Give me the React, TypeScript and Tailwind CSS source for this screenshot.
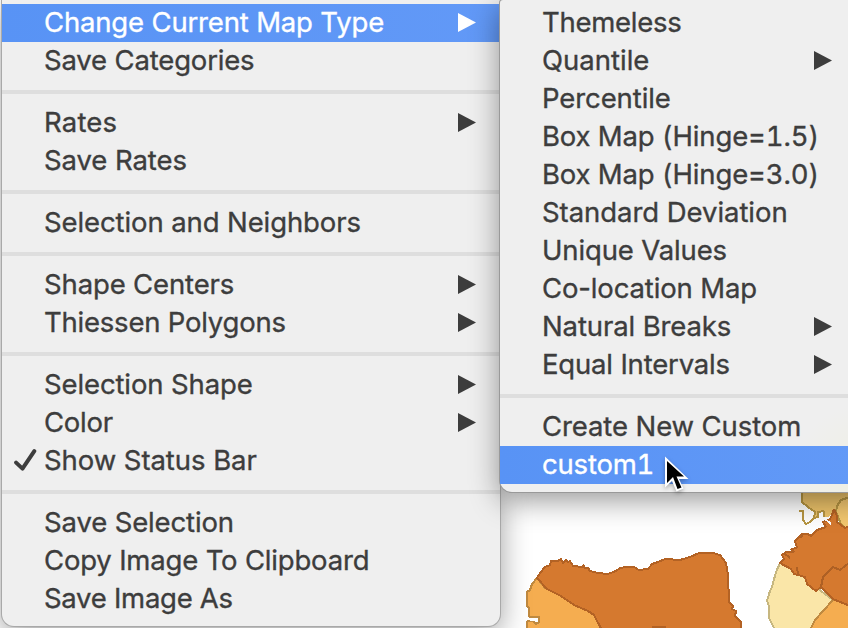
type Entry = {
  label: string;
  spacing?: string;
  arrow?: boolean;
  checked?: boolean;
  active?: boolean;
};

const mainGroups: Entry[][] = [
  [
    { label: "Change Current Map Type", spacing: "tracking-[-0.17px]", arrow: true, active: true },
    { label: "Save Categories", spacing: "tracking-[-0.17px]" },
  ],
  [
    { label: "Rates", spacing: "tracking-[0.2px]", arrow: true },
    { label: "Save Rates", spacing: "tracking-[-0.08px]" },
  ],
  [{ label: "Selection and Neighbors", spacing: "tracking-[-0.1px]" }],
  [
    { label: "Shape Centers", spacing: "tracking-[-0.14px]", arrow: true },
    { label: "Thiessen Polygons", spacing: "tracking-[-0.22px]", arrow: true },
  ],
  [
    { label: "Selection Shape", spacing: "tracking-[-0.12px]", arrow: true },
    { label: "Color", spacing: "tracking-[-0.25px]", arrow: true },
    { label: "Show Status Bar", spacing: "tracking-[-0.06px]", checked: true },
  ],
  [
    { label: "Save Selection", spacing: "tracking-[-0.14px]" },
    { label: "Copy Image To Clipboard", spacing: "tracking-[-0.18px]" },
    { label: "Save Image As", spacing: "tracking-[-0.28px]" },
  ],
];

const subGroups: Entry[][] = [
  [
    { label: "Themeless", spacing: "tracking-[-0.28px]" },
    { label: "Quantile", arrow: true },
    { label: "Percentile", spacing: "tracking-[-0.1px]" },
    { label: "Box Map (Hinge=1.5)", spacing: "tracking-[-0.12px] tabular-nums" },
    { label: "Box Map (Hinge=3.0)", spacing: "tracking-[-0.12px] tabular-nums" },
    { label: "Standard Deviation", spacing: "tracking-[-0.05px]" },
    { label: "Unique Values", spacing: "tracking-[-0.14px]" },
    { label: "Co-location Map", spacing: "tracking-[-0.14px]" },
    { label: "Natural Breaks", spacing: "tracking-[-0.12px]", arrow: true },
    { label: "Equal Intervals", spacing: "tracking-[-0.18px]", arrow: true },
  ],
  [
    { label: "Create New Custom", spacing: "tracking-[-0.1px]" },
    { label: "custom1", spacing: "tracking-[-0.2px] tabular-nums", active: true },
  ],
];

function Arrow() {
  return (
    <svg className="ml-auto mr-6 h-5 w-[18px] shrink-0" viewBox="0 0 18 20" fill="currentColor">
      <path d="M0 0L18 9.5L0 19Z" />
    </svg>
  );
}

function Check() {
  return (
    <svg className="ml-3 h-6 w-6" viewBox="0 0 24 24" fill="none" stroke="currentColor" strokeWidth="4" strokeLinecap="round" strokeLinejoin="round">
      <path d="M3.6 12.6L10 18.6L21.8 1.2" transform="translate(-1.5 1)" />
    </svg>
  );
}

function Row({ item }: { item: Entry }) {
  return (
    <div
      className={`flex h-[38px] items-center whitespace-nowrap ${
        item.active ? "bg-gradient-to-r from-[#5893f5] to-[#6299f7] text-white" : ""
      }`}
    >
      <div className="w-[42px] shrink-0">{item.checked && <Check />}</div>
      <span className={`pb-0.5 text-[27.5px] leading-9 [-webkit-text-stroke:0.35px_currentColor] ${item.spacing ?? ""}`}>{item.label}</span>
      {item.arrow && <Arrow />}
    </div>
  );
}

function Groups({ groups }: { groups: Entry[][] }) {
  return (
    <>
      {groups.map((group, i) => (
        <div key={i}>
          {i > 0 && <div className="my-2.5 h-1 bg-[#dedede]" />}
          {group.map((item) => (
            <Row key={item.label} item={item} />
          ))}
        </div>
      ))}
    </>
  );
}

function MapCanvas() {
  return (
    <svg className="absolute left-0 top-0 h-[628px] w-[848px]" viewBox="0 0 848 628" strokeWidth="2" strokeLinejoin="bevel" shapeRendering="crispEdges">
      <path d="M537 578L532 584L530 590L527 592V606L529 608V617H539V622L536 624L533 621H527V630H606L596 614L588 610L575 605L560 595L550 590L545 588Z" fill="#f5ad50" stroke="#c08a40" />
      <path d="M528 619H538V621H530Z" fill="#fff" />
      <path d="M537 578L540 573L545 567L550 565L551 561L558 561L561 559L563 563L566 560L568 562L570 561L573 566L582 567L583 565L585 568L588 568L590 571L598 573L608 574L616 571L620 568L626 567L634 567L639 570L648 569L652 564L658 562L665 559L680 560L690 557L699 553L713 553L720 555L726 563L728 575L729 602L733 606L732 609L736 611L735 616L737 618L741 622V630H602L597 621L594 615L588 611L574 605L561 596L547 589Z" fill="#d5792f" stroke="#b36224" />
      <path d="M652 627H666" fill="none" stroke="#b36224" />
      <path d="M801 490L802 502L809 508L816 513L814 518L818 517V512L824 511L824 517H828L834 512L840 520L848 525V490Z" fill="#edc36a" />
      <path d="M802 490V502L808 507L815 512L814 518L810 522L806 524L803 520L803 511H799M814 518L818 517V512L824 511V517" fill="none" stroke="#b79643" />
      <path d="M850 497L841 500L837 506L836 512L841 524L845 528L850 526" fill="#f4c870" stroke="#b79643" />
      <path d="M780 563L776 572L772 587L770 591L767 601L769 606V618L775 630H815L833 600L817 588L805 577L792 568Z" fill="#fae6a8" stroke="#c7b780" />
      <path d="M833 600L815 620L810 630H850V602Z" fill="#f5ad50" stroke="#c08a40" />
      <path d="M834 509L837 516V522L845 528L850 526V606L833 599L821 587L816 591L807 584L805 577L798 575L794 574L791 569L780 563L784 559L782 555L786 552L794 552L791 549L797 548L795 541L802 534L808 534L811 536L817 530L826 527L823 522L830 519L832 515Z" fill="#d5792f" stroke="#b36224" />
      <path d="M821 587L823 577L833 567L840 570L850 562M798 575L797 567M784 553L790 558M803 534L801 538" fill="none" stroke="#ae6024" />
      <path d="M824 518L831 524" fill="none" stroke="#fff" />
    </svg>
  );
}

function Cursor() {
  return (
    <svg className="absolute left-[662px] top-[452px] h-[44px] w-[30px] drop-shadow-[0_2px_2px_rgba(0,0,0,0.3)]" viewBox="0 0 30 44">
      <path d="M3 4.5V35.5L10 29L14.5 39.5L21.5 36.5L17 27H26.5Z" fill="#fff" />
      <path d="M5 9V31L11 25L15.5 37L19.5 35.5L14.5 24.5H22Z" fill="#000" />
    </svg>
  );
}

export default function App() {
  return (
    <div className="relative h-[628px] w-[848px] overflow-hidden bg-white font-['Inter',sans-serif] text-[#3d3d3d]">
      <MapCanvas />
      <div className="relative ml-[2px] h-[626px] w-[498px] rounded-b-xl bg-[#efefef] pt-1 shadow-[0_0_0_1px_#a9a9a9,0_8px_30px_rgba(0,0,0,0.4)]">
        <Groups groups={mainGroups} />
      </div>
      <div className="absolute left-[500px] top-0 h-[492px] w-[374px] rounded-bl-xl rounded-tl-[3px] bg-[#efefef] bg-[radial-gradient(circle_at_bottom_right,#efefe0,#efefef_90px)] pt-1 shadow-[0_0_0_1px_#999,0_8px_30px_rgba(0,0,0,0.42)]">
        <div className="w-[356px]">
          <Groups groups={subGroups} />
        </div>
      </div>
      <Cursor />
    </div>
  );
}
